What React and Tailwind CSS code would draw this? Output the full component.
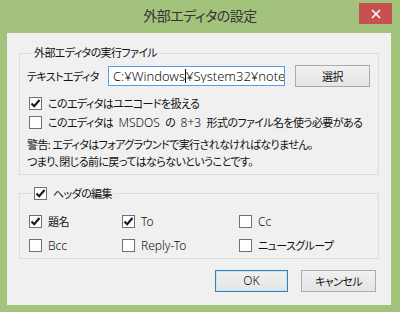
import React from "react";

const font = "font-['Noto_Sans','Noto_Sans_CJK_JP',sans-serif] [font-feature-settings:'palt']";
// Japanese text: narrower to match the UI font width
const jp = "text-[11px] tracking-[-0.6px]";
const latinText = "text-[12px] font-light tracking-normal";

const Check = ({ checked }) => (
  <span className="flex h-[13px] w-[13px] shrink-0 items-center justify-center border border-[#707070] bg-white">
    {checked && (
      <svg width="11" height="11" viewBox="0 0 11 11">
        <path d="M1.5 5.5 L4.2 8.2 L9.5 2" fill="none" stroke="#1a1a1a" strokeWidth="2.2" />
      </svg>
    )}
  </span>
);

const CheckRow = ({ checked, label, latin, className = "" }) => (
  <div className={`flex items-center gap-[6px] whitespace-nowrap ${className}`}>
    <Check checked={checked} />
    <span className={latin ? latinText : jp}>{label}</span>
  </div>
);

const Button = ({ children, primary, latin, className = "" }) => (
  <button
    className={`flex h-[22px] items-center justify-center border bg-gradient-to-b from-[#f0f0f0] to-[#e5e5e5] text-[#111] ${
      latin ? latinText : jp
    } ${primary ? "border-[#3c7fb1] shadow-[inset_0_0_0_1px_#c4e5f6]" : "border-[#acacac]"} ${className}`}
  >
    {children}
  </button>
);

const L = ({ children }) => <span className={latinText}>{children}</span>;

export default function App() {
  const headers = [
    { label: "題名", checked: true },
    { label: "To", checked: true, latin: true },
    { label: "Cc", checked: false, latin: true },
    { label: "Bcc", checked: false, latin: true },
    { label: "Reply-To", checked: false, latin: true },
    { label: "ニュースグループ", checked: false },
  ];

  return (
    <div className={`flex h-[312px] w-[400px] flex-col bg-[#a3c27b] ${font} text-[12px] leading-none text-[#111]`}>
      {/* Title bar */}
      <div className="relative flex h-[33px] shrink-0 items-center justify-center pb-[1px]">
        <span className="text-[14px] tracking-[-0.5px] text-[#333]">外部エディタの設定</span>
        <div className="absolute right-[8px] top-[3px] flex h-[21px] w-[33px] items-center justify-center bg-[#c75050]">
          <svg width="10" height="10" viewBox="0 0 10 10">
            <path d="M1 1 L9 9 M9 1 L1 9" stroke="white" strokeWidth="1.6" />
          </svg>
        </div>
      </div>

      {/* Client area */}
      <div className="ml-[7px] flex h-[272px] w-[384px] flex-col bg-[#f0f0f0] px-[12px] pt-[13px]">
        <fieldset className="h-[129px] border border-[#dcdcdc] px-[7px]">
          <legend className={`ml-[5px] px-[2px] leading-[14px] ${jp}`}>外部エディタの実行ファイル</legend>
          <div className="mt-[5px] flex items-center">
            <span className={`w-[81px] whitespace-nowrap ${jp}`}>テキストエディタ</span>
            <div className="flex h-[20px] w-[177px] items-center overflow-hidden whitespace-nowrap border border-[#569de5] bg-white pl-[4px] text-[13px] font-light">
              <span className="shrink-0">C:¥Windows</span>
              <span className="h-[14px] w-px shrink-0 bg-black" />
              <span className="min-w-0 overflow-hidden">¥System32¥notepad.exe</span>
            </div>
            <Button className="ml-[10px] w-[75px]">選択</Button>
          </div>
          <CheckRow checked label="このエディタはユニコードを扱える" className="ml-[2px] mt-[10px]" />
          <CheckRow
            label={
              <>
                このエディタは <L>&nbsp;MSDOS&nbsp;</L> の <L>&nbsp;8+3&nbsp;</L> 形式のファイル名を使う必要がある
              </>
            }
            className="ml-[2px] mt-[6px]"
          />
          <p className={`mt-[7px] whitespace-nowrap leading-[17px] ${jp}`}>
            警告: エディタはフォアグラウンドで実行されなければなりません。
            <br />
            つまり、閉じる前に戻ってはならないということです。
          </p>
        </fieldset>

        <fieldset className="mt-[12px] h-[72px] border border-[#dcdcdc] px-[9px]">
          <legend className="ml-[4px] px-[1px]">
            <CheckRow checked label="ヘッダの編集" />
          </legend>
          <div className="mt-[15px] grid grid-cols-[93px_117px_1fr] gap-y-[11px]">
            {headers.map((h) => (
              <CheckRow key={h.label} checked={h.checked} label={h.label} latin={h.latin} />
            ))}
          </div>
        </fieldset>

        <div className="mt-[11px] flex justify-end gap-[13px] pr-[3px]">
          <Button primary latin className="w-[73px]">OK</Button>
          <Button className="w-[75px]">キャンセル</Button>
        </div>
      </div>
    </div>
  );
}
